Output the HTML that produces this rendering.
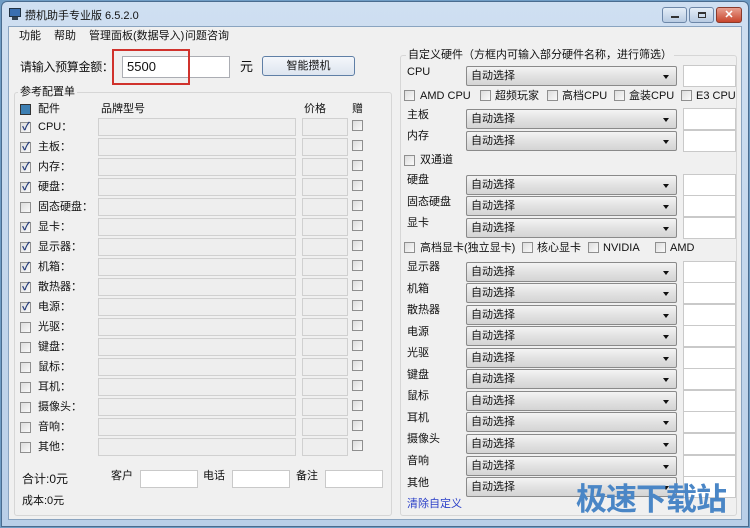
<!DOCTYPE html><html><head><meta charset="utf-8"><style>
*{box-sizing:border-box;margin:0;padding:0}
body{width:750px;height:528px;overflow:hidden;background:#6f9cc4;font-family:"Liberation Sans","Noto Sans CJK SC",sans-serif;font-size:11px;line-height:14px;color:#111;position:relative}
.a{position:absolute}
.win{left:1px;top:1px;width:748px;height:526px;background:linear-gradient(#cfdff1,#b9cfe8);border:1px solid #4a6c8f;border-radius:6px 6px 0 0}
.client{left:8px;top:26px;width:734px;height:494px;background:#f0f0f0;border:1px solid #8aa4c0}
.cb{position:absolute;width:11px;height:11px;border:1px solid #8f8f8f;background:linear-gradient(135deg,#ddd,#fafafa)}
.cb.on::after{content:"✓";position:absolute;left:1px;top:-2px;font-size:11px;line-height:12px;color:#223a7a;font-weight:bold}
.fld{position:absolute;height:18px;border:1px solid #d0d0d0;background:#eeeeee}
.grp{position:absolute;border:1px solid #d6d6d6;border-radius:3px}
.combo{position:absolute;left:466px;width:211px;height:20px;border:1px solid #8a8a8a;border-radius:2px;background:linear-gradient(#f4f4f4,#e2e2e2 50%,#d4d4d4);padding:0 0 0 4px;font-size:11px;line-height:18px}
.combo::after{content:"";position:absolute;right:7px;top:8px;border:3px solid transparent;border-top:4px solid #111}
.tb{position:absolute;left:683px;width:53px;height:22px;background:#fff;border:1px solid #c9c9c9}
.lab{position:absolute;font-size:11px}
</style></head><body>
<div class="a win"></div>
<div class="a" style="left:9px;top:8px;width:12px;height:9px;background:#3a6fb0;border:1px solid #234"></div>
<div class="a" style="left:12px;top:17px;width:6px;height:3px;background:#345"></div>
<div class="a" style="left:25px;top:9px;font-size:11px">攒机助手专业版 6.5.2.0</div>
<div class="a" style="left:662px;top:7px;width:25px;height:16px;border:1px solid #6d87a8;border-radius:3px;background:linear-gradient(#e4edf7,#b8cbe2)"><div class="a" style="left:8px;top:8px;width:8px;height:2px;background:#333"></div></div>
<div class="a" style="left:689px;top:7px;width:25px;height:16px;border:1px solid #6d87a8;border-radius:3px;background:linear-gradient(#e4edf7,#b8cbe2)"><div class="a" style="left:8px;top:4px;width:8px;height:6px;border:1px solid #333;border-top-width:2px"></div></div>
<div class="a" style="left:716px;top:7px;width:26px;height:16px;border:1px solid #8a3a2a;border-radius:3px;background:linear-gradient(#e8a090,#c8452c);color:#fff;font-size:11px;font-weight:bold;text-align:center;line-height:14px">✕</div>
<div class="a client"></div>
<div class="a" style="left:19px;top:29px">功能</div>
<div class="a" style="left:54px;top:29px">帮助</div>
<div class="a" style="left:89px;top:29px">管理面板(数据导入)</div>
<div class="a" style="left:185px;top:29px">问题咨询</div>
<div class="a" style="left:20px;top:59px;font-size:12px;letter-spacing:-0.3px;line-height:16px">请输入预算金额：</div>
<div class="a" style="left:122px;top:56px;width:108px;height:22px;background:#fff;border:1px solid #abadb3;padding:0 0 0 4px;font-size:13px;line-height:20px">5500</div>
<div class="a" style="left:112px;top:49px;width:78px;height:36px;border:2px solid #d0322c"></div>
<div class="a" style="left:240px;top:59px;font-size:13px;line-height:16px">元</div>
<div class="a" style="left:262px;top:56px;width:93px;height:20px;border:1px solid #5f7fa6;border-radius:3px;background:linear-gradient(#f4f7fb,#dde5ef);text-align:center;line-height:18px">智能攒机</div>
<div class="grp" style="left:14px;top:92px;width:378px;height:424px"></div>
<div class="a" style="left:18px;top:85px;background:#f0f0f0;padding:0 2px">参考配置单</div>
<div class="cb" style="left:20px;top:104px;background:#3d7fb3;border-color:#333"></div>
<div class="lab" style="left:38px;top:102px">配件</div>
<div class="lab" style="left:101px;top:102px">品牌型号</div>
<div class="lab" style="left:304px;top:102px">价格</div>
<div class="lab" style="left:352px;top:102px">赠</div>

<div class="cb on" style="left:20px;top:122px"></div><div class="lab" style="left:38px;top:120px">CPU：</div><div class="fld" style="left:98px;top:118px;width:198px"></div><div class="fld" style="left:302px;top:118px;width:46px"></div><div class="cb" style="left:352px;top:120px"></div>
<div class="cb on" style="left:20px;top:142px"></div><div class="lab" style="left:38px;top:140px">主板：</div><div class="fld" style="left:98px;top:138px;width:198px"></div><div class="fld" style="left:302px;top:138px;width:46px"></div><div class="cb" style="left:352px;top:140px"></div>
<div class="cb on" style="left:20px;top:162px"></div><div class="lab" style="left:38px;top:160px">内存：</div><div class="fld" style="left:98px;top:158px;width:198px"></div><div class="fld" style="left:302px;top:158px;width:46px"></div><div class="cb" style="left:352px;top:160px"></div>
<div class="cb on" style="left:20px;top:182px"></div><div class="lab" style="left:38px;top:180px">硬盘：</div><div class="fld" style="left:98px;top:178px;width:198px"></div><div class="fld" style="left:302px;top:178px;width:46px"></div><div class="cb" style="left:352px;top:180px"></div>
<div class="cb" style="left:20px;top:202px"></div><div class="lab" style="left:38px;top:200px">固态硬盘：</div><div class="fld" style="left:98px;top:198px;width:198px"></div><div class="fld" style="left:302px;top:198px;width:46px"></div><div class="cb" style="left:352px;top:200px"></div>
<div class="cb on" style="left:20px;top:222px"></div><div class="lab" style="left:38px;top:220px">显卡：</div><div class="fld" style="left:98px;top:218px;width:198px"></div><div class="fld" style="left:302px;top:218px;width:46px"></div><div class="cb" style="left:352px;top:220px"></div>
<div class="cb on" style="left:20px;top:242px"></div><div class="lab" style="left:38px;top:240px">显示器：</div><div class="fld" style="left:98px;top:238px;width:198px"></div><div class="fld" style="left:302px;top:238px;width:46px"></div><div class="cb" style="left:352px;top:240px"></div>
<div class="cb on" style="left:20px;top:262px"></div><div class="lab" style="left:38px;top:260px">机箱：</div><div class="fld" style="left:98px;top:258px;width:198px"></div><div class="fld" style="left:302px;top:258px;width:46px"></div><div class="cb" style="left:352px;top:260px"></div>
<div class="cb on" style="left:20px;top:282px"></div><div class="lab" style="left:38px;top:280px">散热器：</div><div class="fld" style="left:98px;top:278px;width:198px"></div><div class="fld" style="left:302px;top:278px;width:46px"></div><div class="cb" style="left:352px;top:280px"></div>
<div class="cb on" style="left:20px;top:302px"></div><div class="lab" style="left:38px;top:300px">电源：</div><div class="fld" style="left:98px;top:298px;width:198px"></div><div class="fld" style="left:302px;top:298px;width:46px"></div><div class="cb" style="left:352px;top:300px"></div>
<div class="cb" style="left:20px;top:322px"></div><div class="lab" style="left:38px;top:320px">光驱：</div><div class="fld" style="left:98px;top:318px;width:198px"></div><div class="fld" style="left:302px;top:318px;width:46px"></div><div class="cb" style="left:352px;top:320px"></div>
<div class="cb" style="left:20px;top:342px"></div><div class="lab" style="left:38px;top:340px">键盘：</div><div class="fld" style="left:98px;top:338px;width:198px"></div><div class="fld" style="left:302px;top:338px;width:46px"></div><div class="cb" style="left:352px;top:340px"></div>
<div class="cb" style="left:20px;top:362px"></div><div class="lab" style="left:38px;top:360px">鼠标：</div><div class="fld" style="left:98px;top:358px;width:198px"></div><div class="fld" style="left:302px;top:358px;width:46px"></div><div class="cb" style="left:352px;top:360px"></div>
<div class="cb" style="left:20px;top:382px"></div><div class="lab" style="left:38px;top:380px">耳机：</div><div class="fld" style="left:98px;top:378px;width:198px"></div><div class="fld" style="left:302px;top:378px;width:46px"></div><div class="cb" style="left:352px;top:380px"></div>
<div class="cb" style="left:20px;top:402px"></div><div class="lab" style="left:38px;top:400px">摄像头：</div><div class="fld" style="left:98px;top:398px;width:198px"></div><div class="fld" style="left:302px;top:398px;width:46px"></div><div class="cb" style="left:352px;top:400px"></div>
<div class="cb" style="left:20px;top:422px"></div><div class="lab" style="left:38px;top:420px">音响：</div><div class="fld" style="left:98px;top:418px;width:198px"></div><div class="fld" style="left:302px;top:418px;width:46px"></div><div class="cb" style="left:352px;top:420px"></div>
<div class="cb" style="left:20px;top:442px"></div><div class="lab" style="left:38px;top:440px">其他：</div><div class="fld" style="left:98px;top:438px;width:198px"></div><div class="fld" style="left:302px;top:438px;width:46px"></div><div class="cb" style="left:352px;top:440px"></div>

<div class="lab" style="left:22px;top:472px;font-size:12px">合计:0元</div>
<div class="lab" style="left:22px;top:494px">成本:0元</div>
<div class="lab" style="left:111px;top:469px">客户</div><div class="a" style="left:140px;top:470px;width:58px;height:18px;background:#fff;border:1px solid #c9c9c9"></div>
<div class="lab" style="left:203px;top:469px">电话</div><div class="a" style="left:232px;top:470px;width:58px;height:18px;background:#fff;border:1px solid #c9c9c9"></div>
<div class="lab" style="left:296px;top:469px">备注</div><div class="a" style="left:325px;top:470px;width:58px;height:18px;background:#fff;border:1px solid #c9c9c9"></div>

<div class="grp" style="left:400px;top:55px;width:337px;height:461px"></div>
<div class="a" style="left:406px;top:48px;background:#f0f0f0;padding:0 2px">自定义硬件（方框内可输入部分硬件名称，进行筛选）</div>
<div class="lab" style="left:407px;top:65px">CPU</div><div class="combo" style="top:66px">自动选择</div><div class="tb" style="top:65px"></div>
<div class="cb" style="left:404px;top:90px"></div><div class="lab" style="left:420px;top:89px">AMD CPU</div>
<div class="cb" style="left:480px;top:90px"></div><div class="lab" style="left:495px;top:89px">超频玩家</div>
<div class="cb" style="left:547px;top:90px"></div><div class="lab" style="left:562px;top:89px">高档CPU</div>
<div class="cb" style="left:614px;top:90px"></div><div class="lab" style="left:629px;top:89px">盒装CPU</div>
<div class="cb" style="left:681px;top:90px"></div><div class="lab" style="left:696px;top:89px">E3 CPU</div>
<div class="lab" style="left:407px;top:108px">主板</div><div class="combo" style="top:109px">自动选择</div><div class="tb" style="top:108px"></div>
<div class="lab" style="left:407px;top:129px">内存</div><div class="combo" style="top:131px">自动选择</div><div class="tb" style="top:130px"></div>
<div class="cb" style="left:404px;top:155px"></div><div class="lab" style="left:420px;top:153px">双通道</div>
<div class="lab" style="left:407px;top:173px">硬盘</div><div class="combo" style="top:175px">自动选择</div><div class="tb" style="top:174px"></div>
<div class="lab" style="left:407px;top:195px">固态硬盘</div><div class="combo" style="top:196px">自动选择</div><div class="tb" style="top:195px"></div>
<div class="lab" style="left:407px;top:216px">显卡</div><div class="combo" style="top:218px">自动选择</div><div class="tb" style="top:217px"></div>
<div class="cb" style="left:404px;top:242px"></div><div class="lab" style="left:420px;top:241px">高档显卡(独立显卡)</div>
<div class="cb" style="left:522px;top:242px"></div><div class="lab" style="left:537px;top:241px">核心显卡</div>
<div class="cb" style="left:588px;top:242px"></div><div class="lab" style="left:603px;top:241px">NVIDIA</div>
<div class="cb" style="left:655px;top:242px"></div><div class="lab" style="left:670px;top:241px">AMD</div>
<div class="lab" style="left:407px;top:260px">显示器</div><div class="combo" style="top:262px">自动选择</div><div class="tb" style="top:261px"></div>
<div class="lab" style="left:407px;top:282px">机箱</div><div class="combo" style="top:283px">自动选择</div><div class="tb" style="top:282px"></div>
<div class="lab" style="left:407px;top:303px">散热器</div><div class="combo" style="top:305px">自动选择</div><div class="tb" style="top:304px"></div>
<div class="lab" style="left:407px;top:325px">电源</div><div class="combo" style="top:326px">自动选择</div><div class="tb" style="top:325px"></div>
<div class="lab" style="left:407px;top:346px">光驱</div><div class="combo" style="top:348px">自动选择</div><div class="tb" style="top:347px"></div>
<div class="lab" style="left:407px;top:368px">键盘</div><div class="combo" style="top:369px">自动选择</div><div class="tb" style="top:368px"></div>
<div class="lab" style="left:407px;top:389px">鼠标</div><div class="combo" style="top:391px">自动选择</div><div class="tb" style="top:390px"></div>
<div class="lab" style="left:407px;top:411px">耳机</div><div class="combo" style="top:412px">自动选择</div><div class="tb" style="top:411px"></div>
<div class="lab" style="left:407px;top:432px">摄像头</div><div class="combo" style="top:434px">自动选择</div><div class="tb" style="top:433px"></div>
<div class="lab" style="left:407px;top:454px">音响</div><div class="combo" style="top:456px">自动选择</div><div class="tb" style="top:455px"></div>
<div class="lab" style="left:407px;top:476px">其他</div><div class="combo" style="top:477px">自动选择</div><div class="tb" style="top:476px"></div>
<div class="lab" style="left:407px;top:497px;color:#2a3fc8">清除自定义</div>
<div class="a" style="left:576px;top:478px;font-size:31px;font-weight:bold;color:#4a86c6;font-family:'Noto Sans CJK SC',sans-serif;letter-spacing:-1px;line-height:38px">极速下载站</div>
</body></html>
